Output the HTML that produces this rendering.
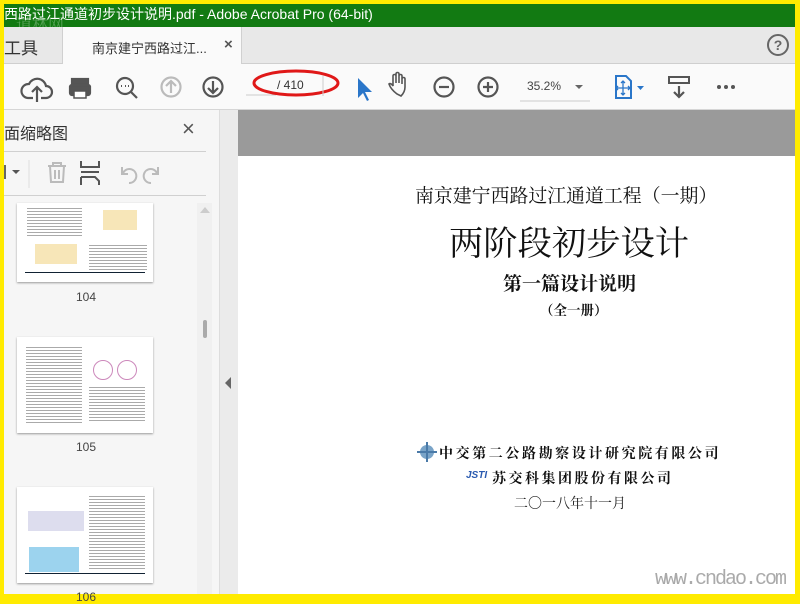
<!DOCTYPE html>
<html><head><meta charset="utf-8"><style>
*{margin:0;padding:0;box-sizing:border-box}
body{width:800px;height:600px;overflow:hidden;background:#ffeb00;font-family:"Liberation Sans","Noto Sans CJK SC",sans-serif;position:relative}
.a{position:absolute}
.serif{font-family:"Liberation Serif","Noto Serif CJK SC",serif;color:#111;white-space:nowrap}
.txt{background-image:repeating-linear-gradient(#fff 0 2px,#aaa 2px 3px)}
</style></head><body>
<div class="a" style="left:4px;top:4px;width:791px;height:23px;background:#127a12"></div>
<div class="a" style="left:4px;top:4px;height:23px;line-height:21px;color:#fff;font-size:14px;white-space:nowrap">西路过江通道初步设计说明.pdf - Adobe Acrobat Pro (64-bit)</div>
<div class="a" style="left:16px;top:12px;color:rgba(200,230,200,.35);font-size:16px;font-family:'Noto Serif CJK SC',serif">道林网</div>
<!-- tab bar -->
<div class="a" style="left:4px;top:27px;width:791px;height:37px;background:#e8e8e8;border-bottom:1px solid #cfcfcf"></div>
<div class="a" style="left:4px;top:34px;font-size:17px;color:#333">工具</div>
<div class="a" style="left:62px;top:27px;width:180px;height:37px;background:#fafafa;border-left:1px solid #d0d0d0;border-right:1px solid #d0d0d0"></div>
<div class="a" style="left:92px;top:38px;font-size:13px;color:#333;white-space:nowrap">南京建宁西路过江...</div>
<div class="a" style="left:224px;top:36px;font-size:15px;color:#555;font-weight:bold">×</div>
<svg class="a" style="left:766px;top:33px" width="24" height="24"><circle cx="12" cy="12" r="10" fill="none" stroke="#666" stroke-width="2"/><text x="12" y="17" text-anchor="middle" font-size="14" font-weight="bold" fill="#666" font-family="Liberation Sans">?</text></svg>
<!-- toolbar -->
<div class="a" style="left:4px;top:64px;width:791px;height:46px;background:#fafafa;border-bottom:1px solid #d6d6d6"></div>
<svg class="a" style="left:4px;top:64px" width="791" height="46" fill="none" stroke="#555" stroke-width="2.2">
<path d="M29 34 h-5 a7 7 0 0 1 1 -14 a9 9 0 0 1 17 2 a6 6 0 0 1 0 12 h-5 M33 38 v-14 M28 28 l5 -5 l5 5"/>
<rect x="68" y="15" width="16" height="6" fill="#555"/><rect x="66" y="21" width="20" height="10" rx="2" fill="#555"/><rect x="70" y="27" width="12" height="7" fill="#fff" stroke="#555" stroke-width="1.5"/>
<circle cx="121" cy="22" r="8"/><path d="M127 28 l6 6"/><path d="M117 22h1M121 22h1M125 22h-1" stroke-width="2"/>
<circle cx="167" cy="23" r="9.5" stroke="#bbb"/><path d="M167 29 v-11 M162 22 l5 -5 l5 5" stroke="#bbb"/>
<circle cx="209" cy="23" r="9.5"/><path d="M209 17 v11 M204 24 l5 5 l5 -5"/>
<path d="M242 31 h30" stroke="#ccc" stroke-width="1"/>
<circle cx="484" cy="23" r="9.5"/><path d="M479 23h10M484 18v10"/>
<circle cx="440" cy="23" r="9.5"/><path d="M435 23h10"/>
<path d="M400 30 c-4-3-7-7-8-10 c1-1 3 0 4 2 v-10 c0-2 3-2 3 0 v7 v-9 c0-2 3-2 3 0 v9 v-7 c0-2 3-2 3 0 v8 v-5 c0-2 3-2 3 0 v8 c0 4-2 7-4 9z" stroke-width="1.6" transform="translate(-7,0)"/>
<path d="M516 37 h70" stroke="#ccc" stroke-width="1"/>
<path d="M571 21 l4 4 l4 -4z" fill="#666" stroke="none"/>
<path d="M612 12 h10 l5 5 v17 h-15z" stroke="#2a76c9" stroke-width="2"/><path d="M619 17 v14 M612 24 h14 M617 19l2-2 2 2M617 29l2 2 2-2M614 22l-2 2 2 2M624 22l2 2-2 2" stroke="#2a76c9" stroke-width="1.3"/>
<path d="M633 22 l3.5 4 l3.5 -4z" fill="#2a76c9" stroke="none"/>
<rect x="665" y="13" width="20" height="6" fill="none" stroke="#555" stroke-width="2"/><path d="M675 22 v11 M670 28 l5 5 l5 -5"/>
<circle cx="715" cy="23" r="2" fill="#555" stroke="none"/><circle cx="722" cy="23" r="2" fill="#555" stroke="none"/><circle cx="729" cy="23" r="2" fill="#555" stroke="none"/>
<path d="M354 14 l0 20 l5-5 l4 8 l2-1 l-4-8 l7 0z" fill="#2a76c9" stroke="none"/>
<ellipse cx="292" cy="19" rx="42" ry="12" stroke="#e01818" stroke-width="3"/>
<path d="M319 12 v20" stroke="#ccc" stroke-width="1"/>
</svg>
<div class="a" style="left:277px;top:78px;font-size:12px;color:#333">/ 410</div>
<div class="a" style="left:527px;top:79px;font-size:12px;color:#444">35.2%</div>
<!-- left panel -->
<div class="a" style="left:4px;top:110px;width:216px;height:484px;background:#f6f6f6;border-right:1px solid #ddd"></div>
<div class="a" style="left:4px;top:120px;font-size:16px;color:#333">面缩略图</div>
<div class="a" style="left:182px;top:116px;font-size:22px;color:#555">×</div>
<div class="a" style="left:4px;top:151px;width:202px;height:1px;background:#d0d0d0"></div>
<div class="a" style="left:4px;top:195px;width:202px;height:1px;background:#d0d0d0"></div>
<svg class="a" style="left:4px;top:155px" width="200" height="38" fill="none" stroke="#bbb" stroke-width="2">
<path d="M1 10v14" stroke="#666"/><path d="M8 15l4 4 4-4z" fill="#555" stroke="none"/><path d="M25 5v28" stroke="#ddd" stroke-width="1"/>
<path d="M44 11h18M49 11v-3h8v3M46 11l1 16h12l1-16M51 15v9M55 15v9"/>
<path d="M77 6v6h18v-6M77 17h18M77 22v8M77 22h14l4 4v4" stroke="#555"/>
<path d="M125 28a7 7 0 1 0 -6 -10M118 12v7h6"/><path d="M147 28a7 7 0 1 1 6 -10M154 12v7h-6"/>
</svg>
<div class="a" style="left:197px;top:203px;width:15px;height:391px;background:#f0f0f0"></div>
<div class="a" style="left:203px;top:320px;width:4px;height:18px;background:#aaa;border-radius:2px"></div>
<div class="a" style="left:200px;top:207px;border:5px solid transparent;border-bottom:6px solid #ccc;border-top:0"></div>
<!-- thumbnails -->
<div class="a" style="left:17px;top:203px;width:136px;height:79px;background:#fff;box-shadow:0 1px 2px #999"></div>
<div class="a txt" style="left:27px;top:206px;width:55px;height:30px"></div>
<div class="a txt" style="left:89px;top:243px;width:58px;height:28px"></div>
<div class="a" style="left:35px;top:244px;width:42px;height:20px;background:#f7e6b8"></div>
<div class="a" style="left:103px;top:210px;width:34px;height:20px;background:#f7e6b8"></div>
<div class="a" style="left:25px;top:272px;width:120px;height:1px;background:#123"></div>
<div class="a" style="left:76px;top:290px;font-size:12px;color:#444">104</div>
<div class="a" style="left:17px;top:337px;width:136px;height:96px;background:#fff;box-shadow:0 1px 2px #999"></div>
<div class="a txt" style="left:26px;top:345px;width:56px;height:78px"></div>
<div class="a txt" style="left:89px;top:385px;width:56px;height:38px"></div>
<div class="a" style="left:93px;top:360px;width:20px;height:20px;border:1px solid #c8b;border-radius:50%"></div>
<div class="a" style="left:117px;top:360px;width:20px;height:20px;border:1px solid #c8b;border-radius:50%"></div>
<div class="a" style="left:76px;top:440px;font-size:12px;color:#444">105</div>
<div class="a" style="left:17px;top:487px;width:136px;height:96px;background:#fff;box-shadow:0 1px 2px #999"></div>
<div class="a txt" style="left:89px;top:494px;width:56px;height:75px"></div>
<div class="a" style="left:28px;top:511px;width:56px;height:20px;background:#dde;"></div>
<div class="a" style="left:29px;top:547px;width:50px;height:25px;background:#9cd3ee"></div>
<div class="a" style="left:25px;top:573px;width:120px;height:1px;background:#123"></div>
<div class="a" style="left:76px;top:590px;font-size:12px;color:#444">106</div>
<!-- collapse strip -->
<div class="a" style="left:220px;top:110px;width:18px;height:484px;background:#ebebeb"></div>
<div class="a" style="left:225px;top:377px;border:6px solid transparent;border-right:6px solid #666;border-left:0"></div>
<!-- document -->
<div class="a" style="left:238px;top:110px;width:557px;height:46px;background:#9a9a9a"></div>
<div class="a" style="left:238px;top:156px;width:557px;height:438px;background:#fff"></div>
<div class="a serif" style="left:415px;top:181px;font-size:18.9px">南京建宁西路过江通道工程（一期）</div>
<div class="a serif" style="left:449px;top:216px;font-size:34.3px">两阶段初步设计</div>
<div class="a serif" style="left:503px;top:269px;font-size:19px;font-weight:bold">第一篇设计说明</div>
<div class="a serif" style="left:540px;top:299px;font-size:13.5px;font-weight:bold">（全一册）</div>
<svg class="a" style="left:417px;top:442px" width="20" height="20"><circle cx="10" cy="10" r="7" fill="#7aa4c8"/><path d="M10 0v20M0 10h20" stroke="#4a7aa8" stroke-width="2"/></svg>
<div class="a serif" style="left:439px;top:443px;font-size:14px;font-weight:bold;letter-spacing:2.6px">中交第二公路勘察设计研究院有限公司</div>
<div class="a" style="left:466px;top:470px;font-size:10px;font-weight:bold;font-style:italic;color:#2a5ab0">JSTI</div>
<div class="a serif" style="left:492px;top:468px;font-size:14px;font-weight:bold;letter-spacing:2.5px">苏交科集团股份有限公司</div>
<div class="a serif" style="left:514px;top:493px;font-size:14px;letter-spacing:0px;color:#222">二〇一八年十一月</div>
<div class="a" style="left:655px;top:568px;font-size:20px;color:#aaa;font-family:'Liberation Mono',monospace;letter-spacing:-2px">www.cndao.com</div>
</body></html>
